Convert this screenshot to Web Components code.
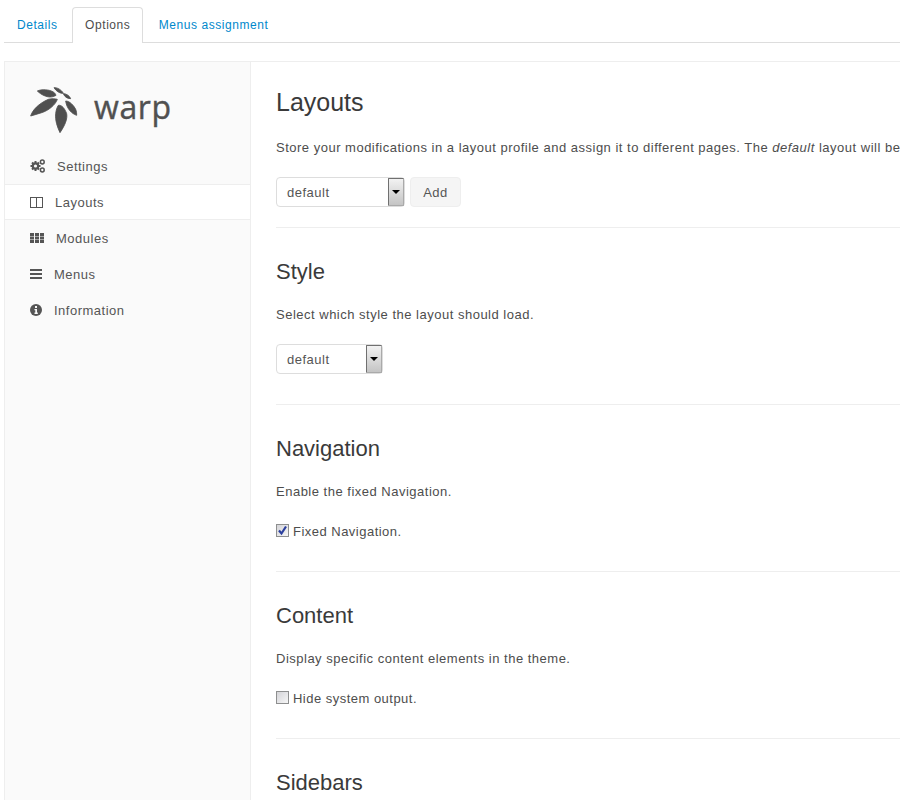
<!DOCTYPE html>
<html><head><meta charset="utf-8"><style>
html,body{margin:0;padding:0;background:#fff;overflow:hidden;height:800px}
body{font-family:"Liberation Sans",Arial,sans-serif;font-size:13px;color:#4d4d4d}
</style></head><body>
<x-tabs></x-tabs>
<x-panel>
 <x-side></x-side>
 <x-main>
  <x-sec h="Layouts" first><p>Store your modifications in a layout profile and assign it to different pages. The <i>default</i> layout will be</p><div style="display:flex;gap:5px"><x-sel w="129"></x-sel><x-btn>Add</x-btn></div></x-sec>
  <x-sec h="Style"><p>Select which style the layout should load.</p><x-sel w="107"></x-sel></x-sec>
  <x-sec h="Navigation"><p>Enable the fixed Navigation.</p><x-chk checked>Fixed Navigation.</x-chk></x-sec>
  <x-sec h="Content"><p>Display specific content elements in the theme.</p><x-chk>Hide system output.</x-chk></x-sec>
  <x-sec h="Sidebars" last></x-sec>
 </x-main>
</x-panel>
<script>
const def=(n,html)=>customElements.define(n,class extends HTMLElement{connectedCallback(){if(this.shadowRoot)return;const s=this.attachShadow({mode:'open'});s.innerHTML=typeof html==='function'?html(this):html;}});
def('x-tabs',`<style>:host{display:flex;margin:7px 0 0 4px;height:35px;border-bottom:1px solid #ddd;font-size:12px;letter-spacing:.56px}
a{display:block;padding:0 13px;line-height:37px;color:#0088cc;height:35px}
a.on{color:#4d4d4d;background:#fff;border:1px solid #ddd;border-bottom:0;height:36px;border-radius:4px 4px 0 0;padding:0 12px;margin:0 2.300px 0 0;box-sizing:border-box;line-height:35px}
a:first-of-type{margin-right:1.500px}</style><a>Details</a><a class="on">Options</a><a>Menus assignment</a>`);
def('x-panel',`<style>:host{display:flex;margin:18px 0 0 4px;border:1px solid #eee;border-right:0;border-bottom:0;height:760px}</style><slot></slot>`);
const I={
gear:`<svg width="15" height="14" viewBox="0 0 15 14"><g fill="#555"><g stroke="#555" stroke-width="2"><path d="M5.500 2v10M.5 7h10M2 3.500l7 7M9 3.500l-7 7"/></g><circle cx="5.500" cy="7" r="3.800"/></g><circle cx="5.500" cy="7" r="1.600" fill="#fafafa"/><g fill="none" stroke="#555" stroke-width="1.500"><circle cx="12.300" cy="3" r="1.900"/><circle cx="12.300" cy="11" r="1.900"/></g></svg>`,
cols:`<svg width="13" height="11" viewBox="0 0 13 11" fill="none" stroke="#555"><rect x=".5" y=".5" width="12" height="10"/><path d="M6.500 .5v10"/></svg>`,
grid:`<svg width="14" height="10" viewBox="0 0 14 10" fill="#555"><path d="M0 0h4v3H0zM5 0h4v3H5zM10 0h4v3h-4zM0 3.500h4v3H0zM5 3.500h4v3H5zM10 3.500h4v3h-4zM0 7h4v3H0zM5 7h4v3H5zM10 7h4v3h-4z"/></svg>`,
bars:`<svg width="12" height="10" viewBox="0 0 12 10" fill="#555"><path d="M0 0h12v2H0zM0 4h12v2H0zM0 8h12v2H0z"/></svg>`,
info:`<svg width="12" height="12" viewBox="0 0 12 12"><circle cx="6" cy="6" r="6" fill="#555"/><path d="M5 2h2v2H5zM4.500 5H7v3.500h.8V10H4.500V8.500h.8V6.300H4.500z" fill="#fafafa"/></svg>`};
def('x-side',`<style>:host{display:block;width:245px;flex:none;background:#fafafa;border-right:1px solid #eee}
.logo{display:flex;align-items:flex-start;height:86px;box-sizing:border-box;padding:20px 0 0 20px}
.logo span{font:32px/1 "Open Sans",sans-serif;color:#505050;margin-left:9px;margin-top:9px;letter-spacing:.6px;-webkit-text-stroke:.4px #505050}
ul{list-style:none;margin:0;padding:0}
li{display:flex;align-items:center;height:34px;padding-left:25px;border-top:1px solid transparent;border-bottom:1px solid transparent;color:#555;font-size:13px;letter-spacing:.5px}
li svg{flex:none}
li span{margin-left:12px}
li.on{background:#fff;border-color:#eee}
</style>
<div class="logo"><svg width="60" height="55" viewBox="0 0 180 165" fill="#505050" stroke="#505050" stroke-width="2.500" stroke-linejoin="round" style="flex:none"><path d="M17 102C22 85 40 65 70 52C80 49 90 50 97 52C92 68 70 86 50 92C38 96 27 99 17 102Z"/><path d="M37 27C50 21 72 22 85 30C90 33 92 37 93 40C82 47 70 46 58 41C50 38 42 32 37 27Z"/><path d="M87 17C97 16 110 24 115 34C105 35 93 27 87 17Z"/><path d="M115 35C125 35 134 42 137 50C127 50 118 44 115 35Z"/><path d="M122 57C135 57 147 72 152 82C155 89 155 95 155 100C140 95 125 80 122 57Z"/><path d="M100 70C110 68 120 80 125 95C128 110 120 130 105 152C97 135 90 115 92 95C93 85 96 76 100 70Z"/></svg><span>warp</span></div>
<ul>
<li>${I.gear}<span>Settings</span></li>
<li class="on">${I.cols}<span>Layouts</span></li>
<li>${I.grid}<span>Modules</span></li>
<li>${I.bars}<span>Menus</span></li>
<li>${I.info}<span>Information</span></li>
</ul>`);
def('x-main',`<style>:host{display:block;flex:1;min-width:0;padding:0 0 0 25px;overflow:hidden}</style><slot></slot>`);
def('x-sec',t=>{const f=t.hasAttribute('first'),l=t.hasAttribute('last');return `<style>:host{display:block;padding:${f?'26px':'30px'} 0 ${f?20:l?0:30}px;border-bottom:${l?'0':'1px solid #eee'}}
h2{font-size:${f?25:22}px;font-weight:400;line-height:28px;margin:0 0 ${f?22:19}px;color:#3a3a3a}
::slotted(p){margin:0 0 19px;font-size:13px;line-height:20px;white-space:nowrap;letter-spacing:.5px;color:#4d4d4d}</style><h2>${t.getAttribute('h')}</h2><slot></slot>`});
def('x-sel',t=>`<style>:host{display:block;box-sizing:border-box;width:${t.getAttribute('w')}px;height:30px;border:1px solid #ddd;border-radius:4px;background:#fff;position:relative;font-size:13px;letter-spacing:.5px;color:#555}
span{display:block;padding-left:10px;line-height:30px;height:28px}
b{position:absolute;right:0;top:0;width:16px;height:28px;box-sizing:border-box;border:1px solid;border-color:#707070 #aaa #aaa #707070;border-radius:1px;background:linear-gradient(#f2f2f2,#c4c4c4)}
b:after{content:"";position:absolute;left:3px;top:11px;border:4px solid transparent;border-top:4px solid #000;border-bottom:0}</style><span>default</span><b></b>`);
def('x-btn',`<style>:host{display:block;box-sizing:border-box;height:30px;width:51px;border:1px solid #eee;border-radius:4px;background:#f5f5f5;text-align:center;line-height:29px;font-size:13px;letter-spacing:.5px;color:#555}</style><slot></slot>`);
def('x-chk',t=>`<style>:host{display:flex;align-items:center;height:20px;font-size:13px;letter-spacing:.48px;color:#4d4d4d}
i{display:block;box-sizing:border-box;width:13px;height:13px;border:1px solid #8e8f8f;background:linear-gradient(135deg,#d4d4d8,#f6f6f6);margin-right:4px;margin-top:-2px;position:relative}
svg{position:absolute;left:0;top:0}</style><i>${t.hasAttribute('checked')?'<svg width="11" height="11" viewBox="0 0 11 11"><path d="M2 5.500l2.500 3L9 1.500" fill="none" stroke="#2b3f9e" stroke-width="2.200"/></svg>':''}</i><slot></slot>`);
</script>
</body></html>
